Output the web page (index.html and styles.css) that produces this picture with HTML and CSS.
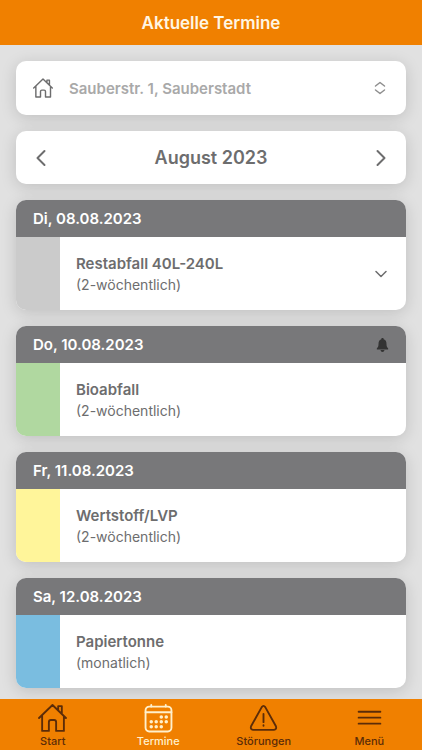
FILE: index.html
```html
<!DOCTYPE html>
<html lang="de">
<head>
<meta charset="utf-8">
<meta name="viewport" content="width=device-width, initial-scale=1">
<title>Aktuelle Termine</title>
<link rel="stylesheet" href="styles.css">
</head>
<body>
<header class="topbar"><h1>Aktuelle Termine</h1></header>

<main class="content">
  <label class="card address">
    <svg class="address-home" viewBox="0 0 28 28" aria-hidden="true"><path d="M1 14 14 1.500 27 14M4 11.500V26.500H10.500V19Q10.500 17 12.500 17H15.500Q17.500 17 17.500 19V26.500H24.500V11.500M19.500 6.500V3H23V10"/></svg>
    <select aria-label="Adresse">
      <option>Sauberstr. 1, Sauberstadt</option>
    </select>
    <svg class="address-arrows" viewBox="0 0 12 14" aria-hidden="true"><path d="M1.500 5 6 1.500 10.500 5M1.500 9 6 12.500 10.500 9"/></svg>
  </label>

  <section class="card month">
    <button type="button" aria-label="Vorheriger Monat"><svg viewBox="0 0 10 18" aria-hidden="true"><path d="M8.500 2 1.500 9 8.500 16"/></svg></button>
    <h2>August 2023</h2>
    <button type="button" aria-label="Nächster Monat"><svg viewBox="0 0 10 18" aria-hidden="true"><path d="M1.500 2 8.500 9 1.500 16"/></svg></button>
  </section>

  <article class="card day">
    <header><h3>Di, 08.08.2023</h3></header>
    <div class="pickup rest">
      <div class="details"><strong>Restabfall 40L-240L</strong><span>(2-wöchentlich)</span></div>
      <button type="button" class="expand" aria-label="Details anzeigen"><svg viewBox="0 0 12 8" aria-hidden="true"><path d="M1 1.500 6 6.500 11 1.500"/></svg></button>
    </div>
  </article>

  <article class="card day">
    <header>
      <h3>Do, 10.08.2023</h3>
      <svg class="bell" viewBox="0 0 12 14" role="img" aria-label="Erinnerung aktiv"><path d="M6 0C6.800 0 7.200.5 7.200 1.200 9.400 1.800 10 3.700 10 6 10 8.700 10.700 9.300 11.500 10.200 12 11 11.700 11.500 11 11.500H1C.3 11.500 0 11 .5 10.200 1.300 9.300 2 8.700 2 6 2 3.700 2.600 1.800 4.800 1.200 4.800.5 5.200 0 6 0ZM4 12H8C7.800 13.300 7 14 6 14S4.200 13.300 4 12Z"/></svg>
    </header>
    <div class="pickup bio">
      <div class="details"><strong>Bioabfall</strong><span>(2-wöchentlich)</span></div>
    </div>
  </article>

  <article class="card day">
    <header><h3>Fr, 11.08.2023</h3></header>
    <div class="pickup plastic">
      <div class="details"><strong>Wertstoff/LVP</strong><span>(2-wöchentlich)</span></div>
    </div>
  </article>

  <article class="card day">
    <header><h3>Sa, 12.08.2023</h3></header>
    <div class="pickup paper">
      <div class="details"><strong>Papiertonne</strong><span>(monatlich)</span></div>
    </div>
  </article>
</main>

<nav class="tabs">
  <a href="#start"><svg viewBox="0 0 28 28" aria-hidden="true"><path d="M1 13.500 14 1 27 13.500M4 11V26H10.500V17.500Q10.500 15.500 12.500 15.500H15.500Q17.500 15.500 17.500 17.500V26H25V11.500M19.500 6V2H23V9.500"/></svg>Start</a>
  <a href="#termine" class="active" aria-current="page"><svg viewBox="0 0 28 28" aria-hidden="true"><rect x="1.500" y="2.500" width="25" height="24" rx="3.500"/><path d="M1.500 8H26.500M7 1V2.500M21 1V2.500"/><path class="dots" d="M16.700 12.500h0M21.500 12.500h0M7 17.200h0M11.800 17.200h0M16.700 17.200h0M21.500 17.200h0M7 22h0M11.800 22h0M16.700 22h0"/></svg>Termine</a>
  <a href="#stoerungen"><svg viewBox="0 0 28 28" aria-hidden="true"><path d="M12.300 3Q14 .6 15.700 3L26 21.500Q27 24.500 24 25H4Q1 24.500 2 21.500ZM14 9.500V17.500M14 20.500v.5"/></svg>Störungen</a>
  <a href="#menue"><svg viewBox="0 0 28 28" aria-hidden="true"><path d="M3.500 7.500H24.500M3.500 13.200H24.500M3.500 19H24.500"/></svg>Menü</a>
</nav>
</body>
</html>
```
FILE: styles.css
```css
* { box-sizing: border-box; }

body {
  margin: 0;
  min-height: 100vh;
  display: flex;
  flex-direction: column;
  background: #e1e1e1;
  color: #6d6d6e;
  font: 14px/21px Inter, "Liberation Sans", sans-serif;
}

h1, h2, h3 { margin: 0; font-weight: 600; }

svg {
  fill: none;
  stroke: currentColor;
  stroke-width: 2;
  stroke-linecap: round;
  stroke-linejoin: round;
}

button {
  display: flex;
  margin: 0;
  padding: 0;
  border: 0;
  background: none;
  color: inherit;
}

.topbar {
  height: 45px;
  display: grid;
  place-items: center;
  background: #f08000;
  color: #fff6e4;
}

.topbar h1 { font-size: 17px; line-height: 24px; }

.content {
  flex: 1;
  display: flex;
  flex-direction: column;
  gap: 16px;
  padding: 16px 16px 10px;
}

.card {
  border-radius: 10px;
  background: #fff;
  box-shadow: 0 3px 16px rgb(0 0 0 / 15%);
}

.address {
  display: flex;
  align-items: center;
  height: 54px;
  padding: 0 20px 0 17px;
  color: #a9a9a9;
}

.address select {
  flex: 1;
  min-width: 0;
  margin: 0 0 0 16px;
  padding: 0;
  border: 0;
  appearance: none;
  background: none;
  color: inherit;
  font: inherit;
  font-size: 15px;
  font-weight: 600;
}

.address-home { width: 20px; height: 20px; color: #6d6d6e; }
.address-arrows { width: 12px; height: 14px; color: #8e8e8e; stroke-width: 1.5; }

.month {
  display: flex;
  align-items: center;
  justify-content: space-between;
  height: 53px;
  padding: 0 20px;
}

.month h2 { font-size: 18px; line-height: 26px; }
.month svg { width: 10px; height: 18px; }

.day { overflow: hidden; }

.day header {
  display: flex;
  align-items: center;
  justify-content: space-between;
  height: 37px;
  padding: 0 17px;
  background: #78787a;
  color: #fff;
}

.day h3 { font-size: 15px; }
.bell { width: 13px; height: 14px; color: #333; fill: currentColor; stroke: none; }

.pickup {
  display: flex;
  align-items: center;
  height: 73px;
  padding-right: 19px;
}

.pickup::before {
  content: "";
  align-self: stretch;
  width: 44px;
  background: var(--bin);
}

.details {
  flex: 1;
  display: flex;
  flex-direction: column;
  padding-left: 16px;
}

.details strong { font-size: 15px; font-weight: 600; }
.expand svg { width: 12px; height: 8px; stroke-width: 1.5; }

.rest { --bin: #cbcbcb; }
.bio { --bin: #b0d8a0; }
.plastic { --bin: #fff59a; }
.paper { --bin: #7abde0; }

.tabs {
  position: sticky;
  bottom: 0;
  display: grid;
  grid-template-columns: repeat(4, 1fr);
  height: 51px;
  background: #f08000;
}

.tabs a {
  display: flex;
  flex-direction: column;
  align-items: center;
  padding-top: 5px;
  color: #5c2c08;
  font-size: 11px;
  font-weight: 500;
  line-height: 16px;
  text-decoration: none;
}

.tabs svg { width: 29px; height: 29px; stroke-width: 1.8; }
.tabs .dots { stroke-width: 3.4; }
.tabs .active { color: #fff0cc; }
```
